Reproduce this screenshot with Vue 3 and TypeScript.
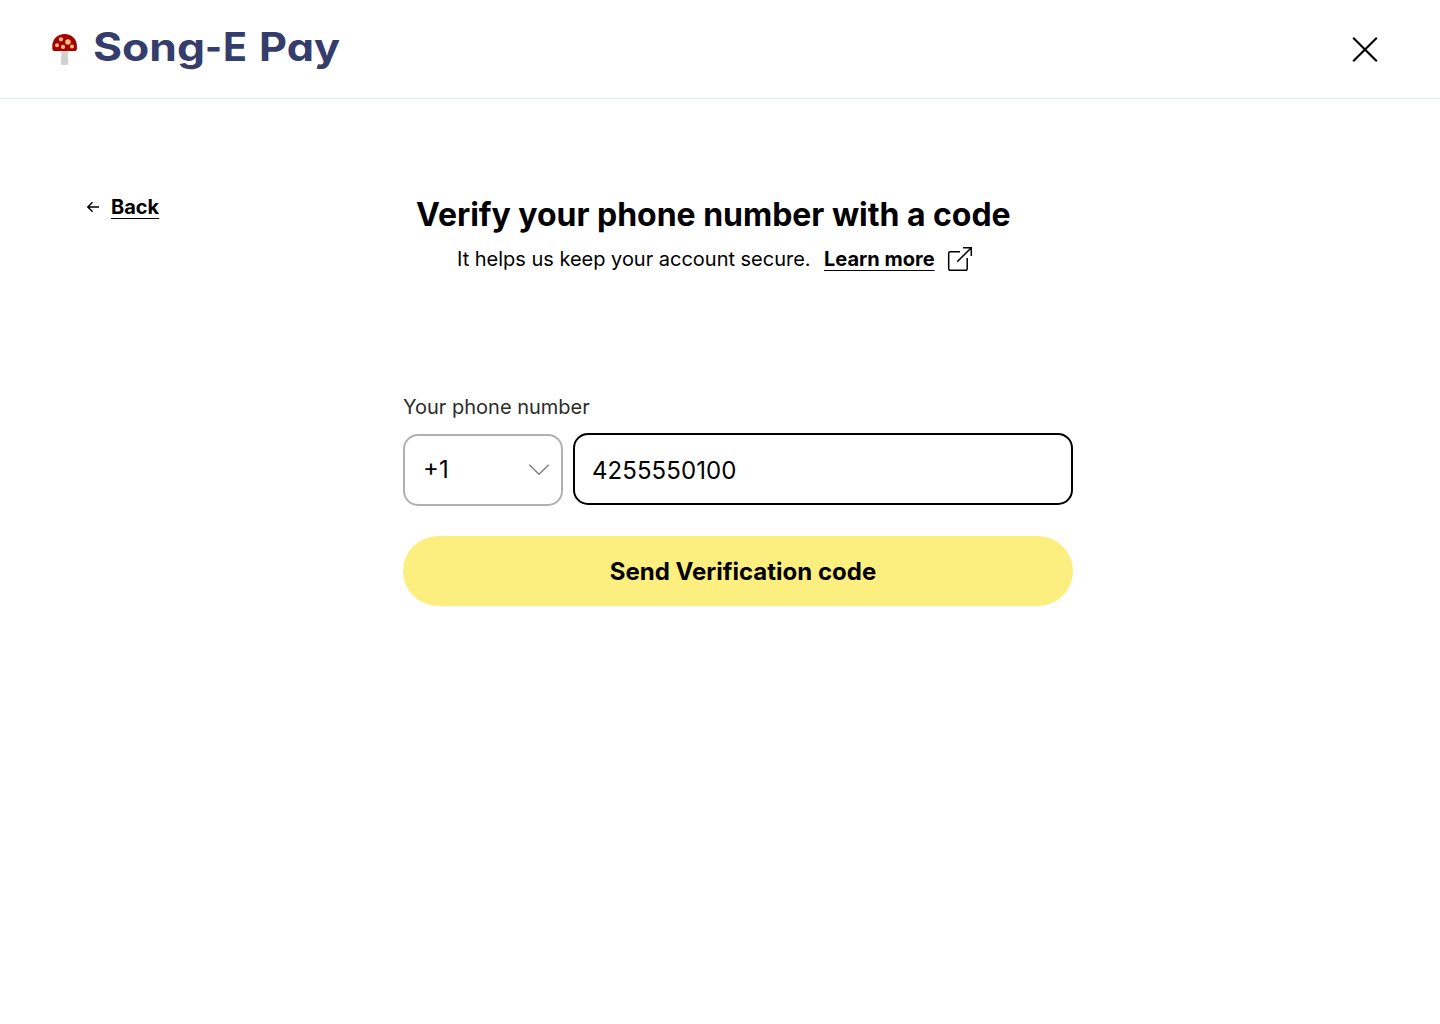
<script setup lang="ts">
import { ref } from 'vue'

interface Spot {
  x: number
  y: number
  r: number
}

const phone = ref<string>('4255550100')
const countryCode = ref<string>('+1')
const spots: Spot[] = [
  { x: 9, y: 5.3, r: 2.1 },
  { x: 16, y: 8, r: 2.8 },
  { x: 5, y: 11.2, r: 2 },
  { x: 11, y: 12.9, r: 2.1 },
  { x: 20, y: 12.5, r: 2 },
]
</script>

<template>
  <div class="page">
    <header class="topbar">
      <div class="brand">
        <svg class="mushroom" width="26" height="32" viewBox="0 0 26 32" aria-hidden="true">
          <path d="M9.600 17h6l.8 11.400c.1 1.600-1 2.700-2.400 2.700h-2.800c-1.400 0-2.500-1.100-2.400-2.700Z" fill="#d0d0d0" />
          <path d="M12.600 0C5.500 0 .3 5.400.3 12v2.200C.3 16.200 1.300 17 3 17h19.200c1.700 0 2.700-.8 2.700-2.800V12C24.900 5.400 19.700 0 12.600 0Z" fill="#a30000" />
          <circle v-for="(s, i) in spots" :key="i" :cx="s.x" :cy="s.y" :r="s.r" fill="#ffbc78" />
        </svg>
        <svg class="wordmark" width="260" height="60" viewBox="0 0 260 60">
          <text x="0" y="42" textLength="112" lengthAdjust="spacingAndGlyphs">Song</text>
          <text x="112" y="42" textLength="17" lengthAdjust="spacingAndGlyphs">-</text>
          <text x="130" y="42" textLength="24" lengthAdjust="spacingAndGlyphs">E</text>
          <text x="166" y="42" textLength="81" lengthAdjust="spacingAndGlyphs">Pay</text>
        </svg>
      </div>
      <button class="close" type="button" aria-label="Close">
        <svg width="26" height="26" viewBox="0 0 26 26">
          <path d="M1.200 1.700 24.800 25.300M24.800 1.700 1.200 25.300" stroke="#000" stroke-width="2.100" fill="none" />
        </svg>
      </button>
    </header>

    <main class="content">
      <a class="back">
        <svg width="12" height="12" viewBox="0 0 12 12" aria-hidden="true">
          <path d="M12 6H1M5.600 1.200 .8 6l4.800 4.800" stroke="#000" stroke-width="1.400" fill="none" />
        </svg>
        <span class="underlined">Back</span>
      </a>

      <section class="verify">
        <h1>Verify your phone number with a code</h1>
        <div class="subtitle">
          <span class="hint">It helps us keep your account secure.</span>
          <span class="underlined learn">Learn more</span>
          <svg width="26" height="26" viewBox="0 0 26 26" aria-hidden="true">
            <path d="M13 5.800H3.200a1.500 1.500 0 0 0-1.500 1.500v15.500a1.500 1.500 0 0 0 1.500 1.500h15.500a1.500 1.500 0 0 0 1.500-1.500V12M10.200 15.800 24.300 1.700M16 1.700h8.300V10" stroke="#000" stroke-width="1.500" fill="none" />
          </svg>
        </div>

        <form class="form" @submit.prevent>
          <label for="phone">Your phone number</label>
          <div class="fields">
            <div class="country">
              <span>{{ countryCode }}</span>
              <svg width="22" height="12" viewBox="0 0 22 12" aria-hidden="true">
                <path d="M1.300 .8 11 10.300 20.700 .8" stroke="#808080" stroke-width="1.500" fill="none" />
              </svg>
            </div>
            <input id="phone" v-model="phone" type="text" />
          </div>
          <button class="send" type="submit"><span>Send Verification code</span></button>
        </form>
      </section>
    </main>
  </div>
</template>

<style>
body {
  background: #fff;
}
</style>

<style scoped>
.page {
  height: 1024px;
  overflow: hidden;
  box-sizing: border-box;
  font-family: Inter, "Liberation Sans", sans-serif;
  font-optical-sizing: none;
  color: #000;
}
.page * {
  box-sizing: border-box;
}
.topbar {
  height: 99px;
  display: flex;
  justify-content: space-between;
  align-items: flex-start;
  padding: 0 62px 0 52px;
  border-bottom: 1px solid #e3ecf2;
}
.brand {
  display: flex;
  align-items: flex-start;
}
.mushroom {
  margin-top: 34px;
}
.wordmark {
  margin: 19px 0 0 15px;
  overflow: visible;
}
.wordmark text {
  font-size: 39px;
  font-weight: 660;
  font-feature-settings: "cv11" 1;
  fill: #343d6b;
}
.close {
  margin-top: 36px;
  padding: 0;
  border: 0;
  background: none;
  display: flex;
}
.content {
  display: flex;
  align-items: flex-start;
}
.back {
  width: 403px;
  padding: 94px 0 0 87px;
  display: flex;
  align-items: center;
  gap: 12px;
  font-size: 20px;
  line-height: 28px;
  font-weight: 700;
}
.underlined {
  text-decoration: underline;
  text-decoration-thickness: 1.400px;
  text-underline-offset: 4px;
  text-decoration-skip-ink: none;
}
.verify {
  width: 670px;
  padding-top: 96px;
}
h1 {
  margin: 0 0 0 13px;
  font-size: 32px;
  line-height: 39px;
  font-weight: 700;
  letter-spacing: -0.025px;
  white-space: nowrap;
}
.subtitle {
  margin: 12px 0 0 54px;
  display: flex;
  align-items: center;
  height: 26px;
  font-size: 20px;
  white-space: nowrap;
}
.hint {
  width: 352px;
  font-weight: 385;
  letter-spacing: -0.015px;
}
.learn {
  margin: 0 12px 0 15px;
  font-weight: 700;
}
.form {
  margin-top: 121px;
}
label {
  display: block;
  font-size: 20px;
  font-weight: 385;
  line-height: 28px;
  color: #2b2b2b;
}
.fields {
  display: flex;
  gap: 10px;
  margin-top: 12px;
}
.country {
  width: 160px;
  height: 72px;
  margin-top: 1px;
  padding: 0 11px 1px 18px;
  border: 2px solid #b0b0b0;
  border-radius: 15px;
  display: flex;
  align-items: center;
  justify-content: space-between;
  font-size: 24px;
}
input {
  width: 500px;
  height: 72px;
  padding: 3px 17px 0;
  border: 2px solid #000;
  border-radius: 15px;
  outline: none;
  background: #fff;
  color: #000;
  font: inherit;
  font-size: 24px;
  font-weight: 390;
  letter-spacing: 0.070px;
}
.send {
  width: 670px;
  height: 70px;
  margin-top: 30px;
  padding: 0 0 0 10px;
  border: 0;
  border-radius: 35px;
  background: #fcee7f;
  color: #000;
  font: inherit;
  font-size: 24px;
  font-weight: 700;
}
</style>
